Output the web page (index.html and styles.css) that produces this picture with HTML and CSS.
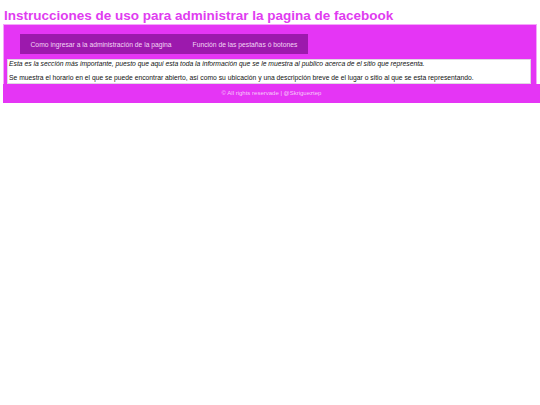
FILE: index.html
```html
<!DOCTYPE html>
<html lang="es">
<head>
<meta charset="utf-8">
<title>Instrucciones</title>
<link rel="stylesheet" href="styles.css">
</head>
<body>
<h1 class="title">Instrucciones de uso para administrar la pagina de facebook</h1>
<div class="container">
  <nav class="nav">
    <a class="nav-item" href="#">Como ingresar a la administración de la pagina</a>
    <a class="nav-item" href="#">Función de las pestañas ó botones</a>
  </nav>
  <div class="content">
    <p class="intro">Esta es la sección más importante, puesto que aqui esta toda la información que se le muestra al publico acerca de el sitio que representa.</p>
    <p class="text">Se muestra el horario en el que se puede encontrar abierto, así como su ubicación y una descripción breve de el lugar o sitio al que se esta representando.</p>
  </div>
</div>
<footer class="footer">© All rights reservade | @Skrigueztep</footer>
</body>
</html>
```
FILE: styles.css
```css
html, body {
  margin: 0;
  padding: 0;
  background: #ffffff;
  font-family: "Liberation Sans", Arial, sans-serif;
}
.title {
  margin: 8px 0 0 4px;
  font-size: 13.5px;
  line-height: 16px;
  font-weight: bold;
  color: #df3cf0;
}
.container {
  margin: 0 0 0 3px;
  width: 532px;
  background: #e535f5;
  border: 1px solid #f4a6fa;
  border-bottom: none;
  padding: 9px 0 0 0;
}
.nav {
  display: flex;
  margin-left: 16px;
  width: 288px;
  height: 20px;
  background: #9c19ad;
  align-items: center;
}
.nav-item {
  padding: 0 10.5px;
  font-size: 6.75px;
  color: #f3d6f5;
  text-decoration: none;
  white-space: nowrap;
}
.content {
  margin: 5px 5px 0 3px;
  background: #ffffff;
  border: 1px solid #e0d6e2;
  padding: 0 1px;
  height: 23px;
}
.content p {
  margin: 0;
  font-size: 6.75px;
  line-height: 8px;
  color: #111;
}
.content .intro {
  font-style: italic;
}
.content .text {
  margin-top: 6px;
}
.footer {
  margin-left: 3px;
  width: 537px;
  height: 19px;
  background: #e535f5;
  color: #f6c9f8;
  font-size: 6px;
  line-height: 19px;
  text-align: center;
}
```
